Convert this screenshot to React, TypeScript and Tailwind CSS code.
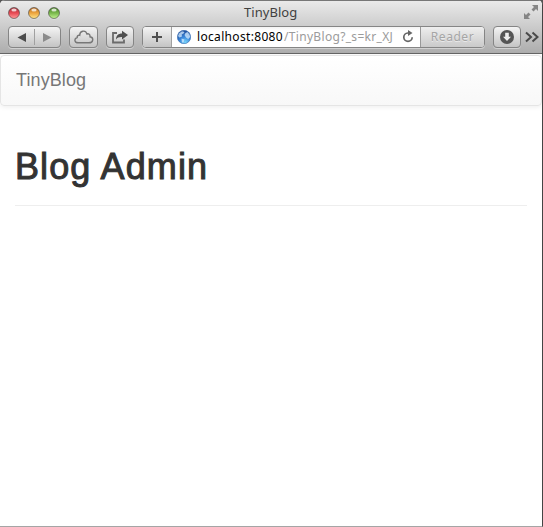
const buttonStyle =
  'flex h-[22px] items-center justify-center rounded-[4px] border border-[#858585] bg-linear-to-b from-[#f4f4f4] to-[#c4c4c4] shadow-[0_1px_0_#ffffff66]';

function Light({ colors, id }: { colors: [string, string, string]; id: string }) {
  return (
    <svg width="14" height="14" viewBox="0 0 14 14">
      <defs>
        <linearGradient id={id} x1="0" y1="0" x2="0" y2="1">
          <stop offset="0" stopColor={colors[0]} />
          <stop offset="0.5" stopColor={colors[1]} />
          <stop offset="1" stopColor={colors[2]} />
        </linearGradient>
      </defs>
      <circle cx="7" cy="7.5" r="6" fill="#fff" opacity="0.5" />
      <circle cx="7" cy="7" r="5.5" fill={`url(#${id})`} stroke="#303030" strokeOpacity="0.55" />
      <ellipse cx="7" cy="4" rx="2.6" ry="1.5" fill="#fff" opacity="0.75" />
    </svg>
  );
}

function Toolbar() {
  return (
    <div className="flex h-7 items-center pl-2 pt-[1px]">
      <div className={`${buttonStyle} w-[53px] shrink-0`}>
        <svg width="51" height="20" viewBox="0 0 51 20">
          <path d="M8.5 10.5 17 6v9z" fill="#4b4b4b" />
          <path d="M25.5 2v16" stroke="#a0a0a0" />
          <path d="M42.5 10.5 34 6v9z" fill="#8b8b8b" />
        </svg>
      </div>
      <div className={`${buttonStyle} ml-2 w-[29px] shrink-0`}>
        <svg width="20" height="14" viewBox="0 0 20 14" fill="none" stroke="#777" strokeWidth="1.4">
          <path d="M4.500 12.800h10.500c4.500 0 5-5.300 1-6 .3-2.500-1.500-3.500-3-2.800C11.500-.5 5.700.700 5.700 5.300c-1.800-.4-2.700.800-2.500 2.300C-.2 8.500.2 12.800 4.500 12.800z" />
        </svg>
      </div>
      <div className={`${buttonStyle} ml-2 w-[28px] shrink-0`}>
        <svg width="18" height="14" viewBox="0 0 18 14">
          <path d="M6 3H2v9.500h11V9.500" fill="none" stroke="#6b6b6b" strokeWidth="1.800" />
          <path d="M5 9.500C5 5.500 7.500 3.500 11 3.500V.7l6 4.300-6 4.500V7C8 6.900 6.500 7.500 5 9.500z" fill="#505050" />
        </svg>
      </div>
      <div className="ml-2 flex h-[22px] w-[343px] shrink-0 overflow-hidden rounded-[4px] border border-[#858585] bg-white shadow-[0_1px_0_#ffffff66]">
        <div className="flex w-[29px] items-center justify-center border-r border-[#a0a0a0] bg-linear-to-b from-[#f4f4f4] to-[#c4c4c4]">
          <svg width="12" height="12" viewBox="0 0 12 12">
            <path d="M6 1v10M1 6h10" stroke="#505050" strokeWidth="2" />
          </svg>
        </div>
        <div className="flex w-[248px] items-center bg-linear-to-b from-[#f3f3f3] via-white via-20% to-white pl-[5px]">
          <svg width="14" height="14" viewBox="0 0 14 14" className="shrink-0">
            <defs>
              <radialGradient id="globe" cx="0.600" cy="0.900" r="0.900">
                <stop offset="0" stopColor="#79d5fa" />
                <stop offset="0.450" stopColor="#3c89dc" />
                <stop offset="1" stopColor="#1d4997" />
              </radialGradient>
            </defs>
            <circle cx="7" cy="7" r="6.700" fill="url(#globe)" stroke="#376db0" strokeWidth="0.600" />
            <path d="M2 3.500 5 1.200l2.500.8-1 1.500L4.700 4.500 5 6.500 2.500 7.500 1 6zM8.500 3l2-1 2 2.500.7 2.500-2 2L9 7.500 7.500 5zM4.500 8.500l3 1-1 3H5z" fill="#d5ecff" opacity="0.750" />
          </svg>
          <div className="ml-[6px] flex h-5 w-[200px] shrink-0 items-center whitespace-nowrap text-[12px]">
            <span className="w-[87px] tracking-[0.330px] text-black">localhost:8080</span>
            <span className="tracking-[0.320px] text-[#9b9b9b]">/TinyBlog?_s=kr_XJ</span>
          </div>
          <svg width="12" height="13" viewBox="0 0 12 13" className="ml-[5px] shrink-0">
            <path d="M7.500 3H5.800a4.200 4.200 0 1 0 4.400 4.300" fill="none" stroke="#666" strokeWidth="1.700" />
            <path d="M6 0v6l4.500-3z" fill="#666" />
          </svg>
        </div>
        <div className="flex w-[64px] items-center justify-center border-l border-[#999] bg-linear-to-b from-[#eee] to-[#cacaca] text-[12px] tracking-[0.550px] text-[#a5a5a5] [text-shadow:0_1px_0_#ffffff80]">
          Reader
        </div>
      </div>
      <div className={`${buttonStyle} ml-2 w-[28px] shrink-0`}>
        <svg width="14" height="14" viewBox="0 0 14 14">
          <circle cx="7" cy="7" r="7" fill="#555" />
          <path d="M5.200 2.800h3.600v4H11l-4 4.200-4-4.200h2.200z" fill="#eee" />
        </svg>
      </div>
      <svg width="14" height="12" viewBox="0 0 14 12" className="ml-[4px] shrink-0">
        <path d="m1 1.500 5 4.500-5 4.500M7.500 1.500l5 4.500-5 4.500" fill="none" stroke="#4a4a4a" strokeWidth="2" />
      </svg>
    </div>
  );
}

export default function App() {
  return (
    <div className="h-[527px] w-[543px] overflow-hidden bg-[#555]">
      <div className="flex h-full flex-col overflow-hidden rounded-t-[5px] border-b border-r border-b-[#a5a5a5] border-r-[#444] bg-white">
        <header className="h-[54px] shrink-0 border-b border-t border-b-[#666] border-t-[#777] bg-linear-to-b from-[#eaeaea] to-[#adadad] font-['Noto_Sans','Open_Sans',sans-serif]">
          <div className="flex h-[21px] items-center pl-[7px] pr-[4px]">
            <div className="flex w-[200px] gap-[6px] pt-[2px]">
              <Light id="red" colors={['#a63840', '#e84953', '#ff9b9b']} />
              <Light id="amber" colors={['#b46c28', '#eda43d', '#ffe68b']} />
              <Light id="green" colors={['#4c832d', '#79b84b', '#c4f494']} />
            </div>
            <h1 className="flex-1 pb-px pl-[37px] pt-[2px] text-[13px] leading-[18px] tracking-[0.050px] text-[#414141]">TinyBlog</h1>
            <svg width="14" height="14" viewBox="0 0 14 14" className="mt-px shrink-0" fill="#858585">
              <path d="M8 0h6v6l-2-2-2.500 2.500-2-2L10 2zM0 8v6h6l-2-2 2.500-2.500-2-2L2 10z" />
            </svg>
          </div>
          <Toolbar />
        </header>
        <main className="flex-1 pt-px font-['Liberation_Sans',Arial,sans-serif]">
          <nav className="h-[51px] rounded-[4px] border border-[#e5e5e5] bg-linear-to-b from-white to-[#f8f8f8] px-[15px] pt-[14px] text-[18px] leading-5 tracking-[0.100px] text-[#777] shadow-[0_1px_5px_#00000013]">
            TinyBlog
          </nav>
          <div className="mx-[15px] mt-[40px] h-[60px] border-b border-[#eee] pt-px">
            <h2 className="text-[36px] leading-[40px] tracking-[1.100px] text-[#333] [-webkit-text-stroke:1px_#333]">Blog Admin</h2>
          </div>
        </main>
      </div>
    </div>
  );
}
